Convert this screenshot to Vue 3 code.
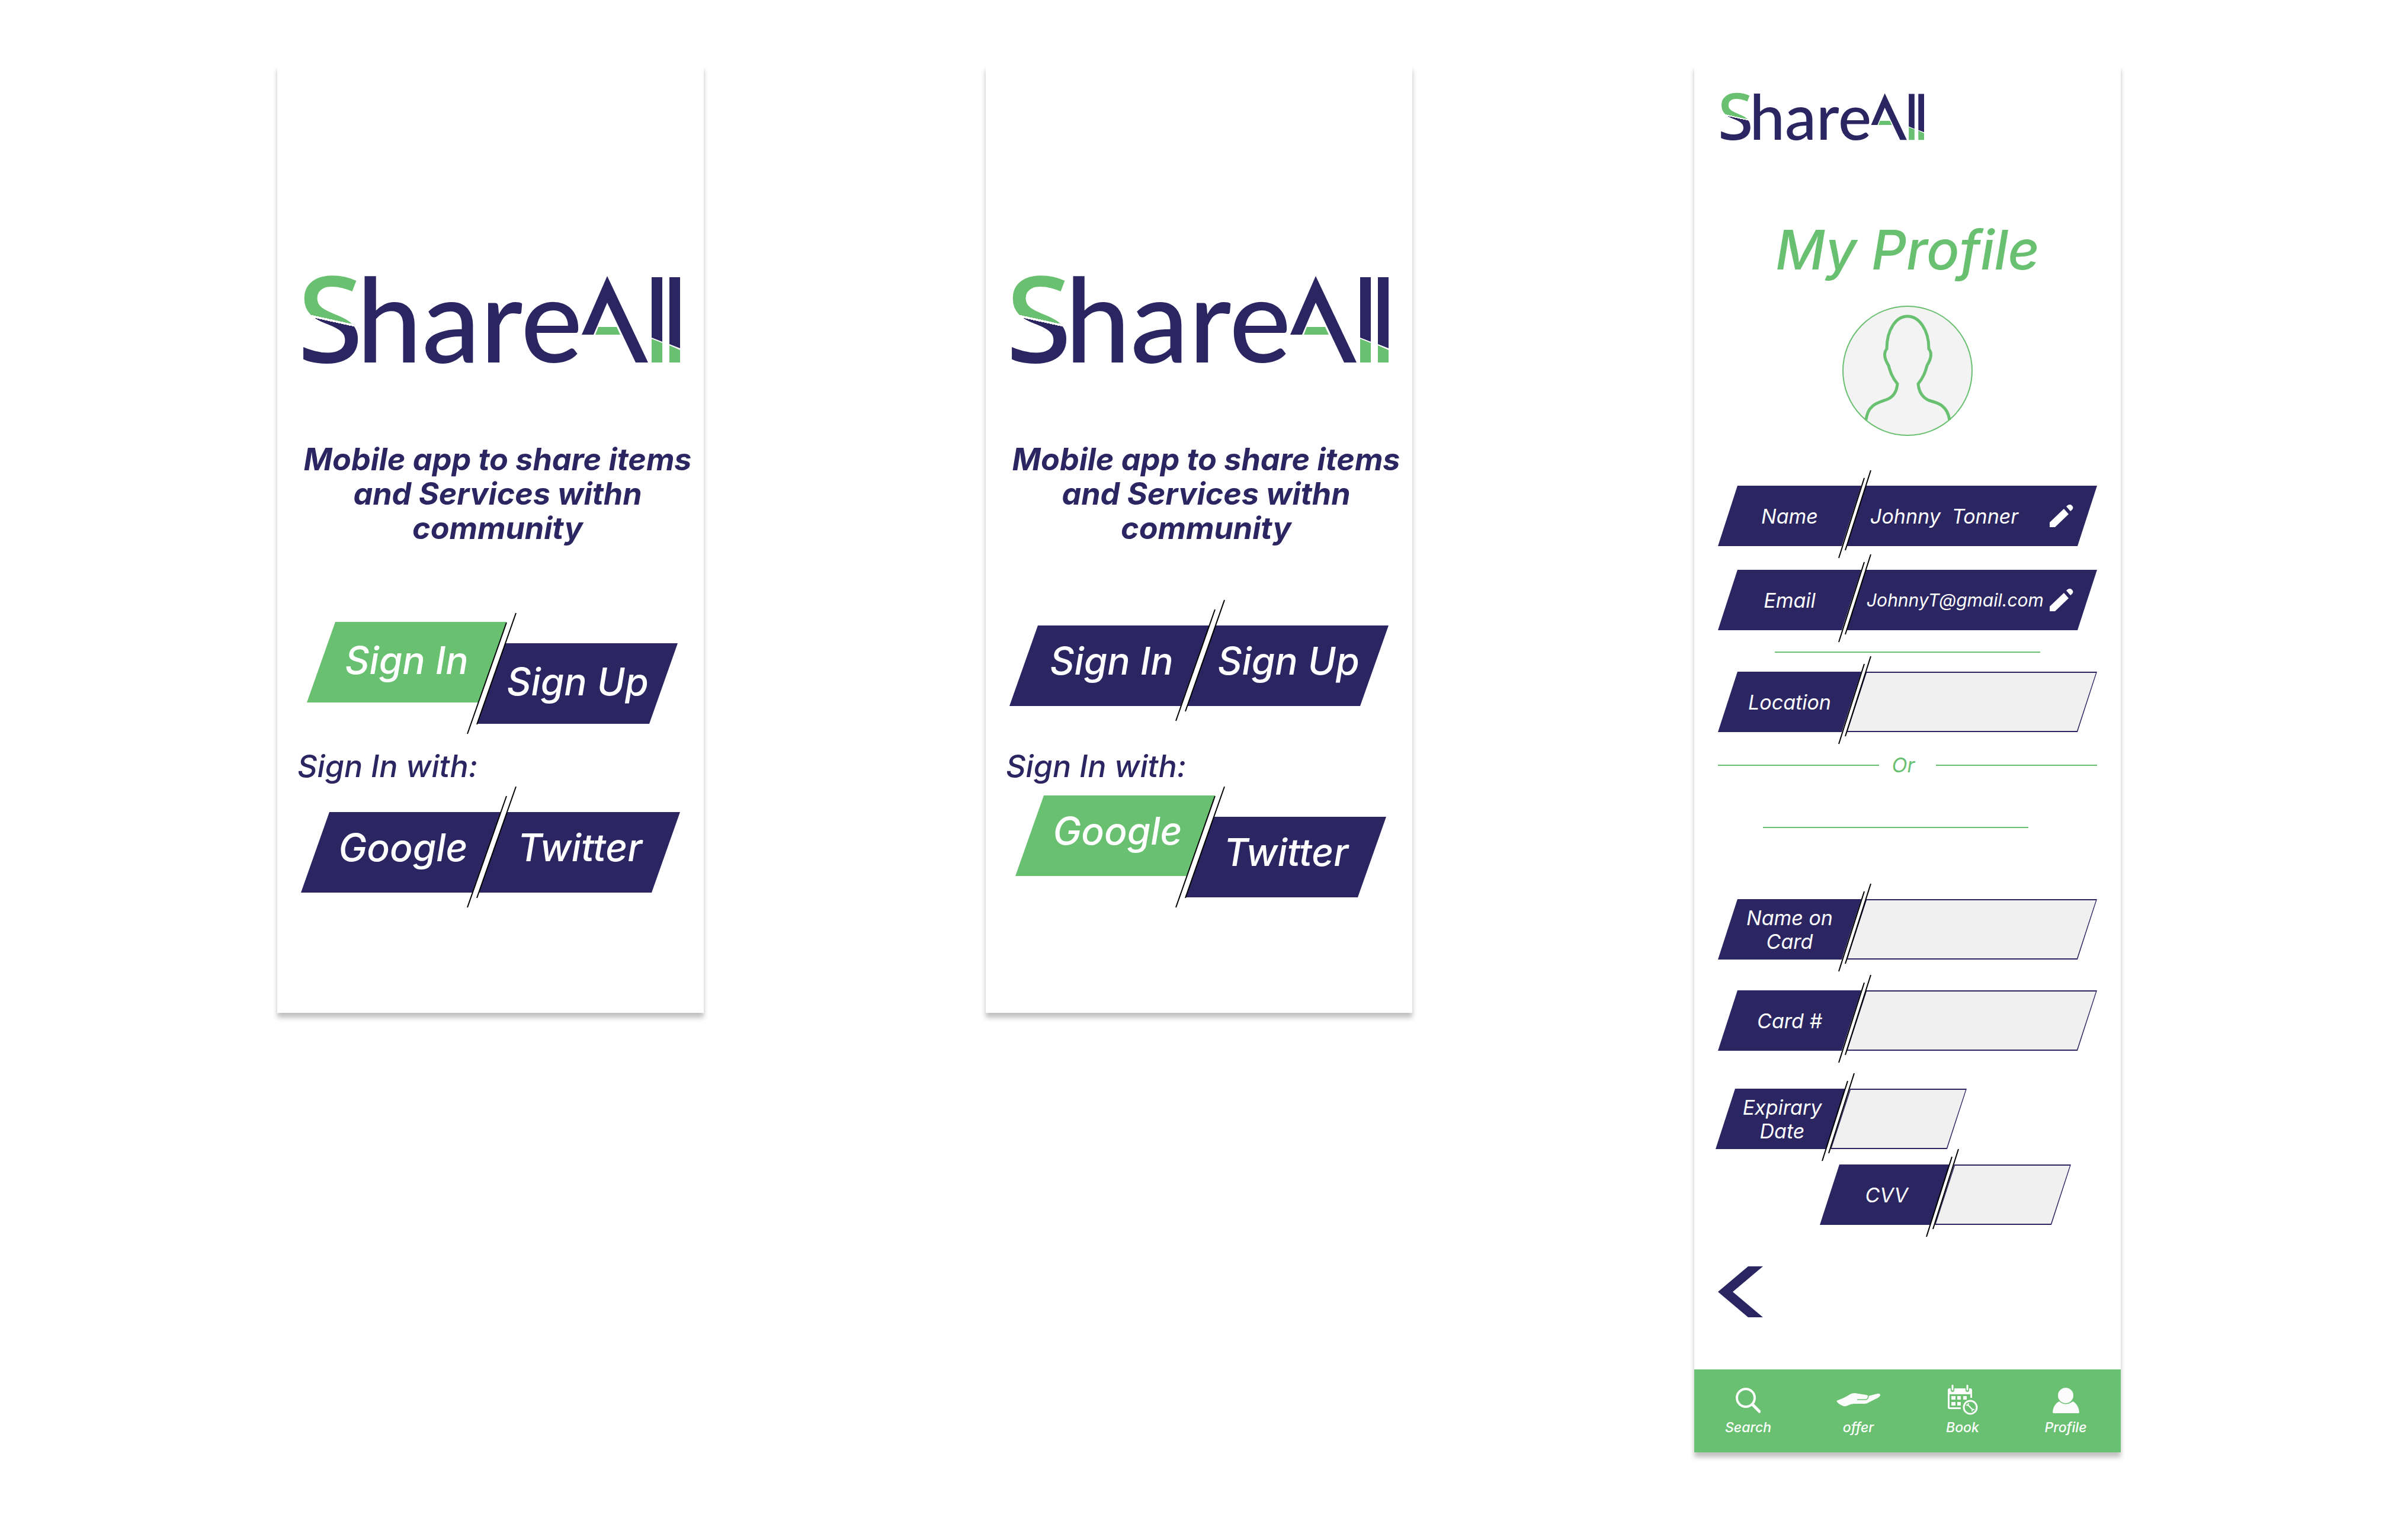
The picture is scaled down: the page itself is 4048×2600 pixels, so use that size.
<script setup>
import { h, reactive } from 'vue'

const NAVY = '#2b2662'
const GREEN = '#69c071'

/* Word mark: live text for "Share", followed by the roof-and-bars emblem. */
const BrandLogo = (props) =>
  h('svg', { viewBox: '0 0 638 150', role: 'img', 'aria-label': 'ShareAll', overflow: 'visible' }, [
    h('defs', [
      h('linearGradient', { id: 'split-' + props.uid, gradientUnits: 'userSpaceOnUse', x1: 66, y1: -23, x2: 23, y2: 173 }, [
        h('stop', { offset: '49.1%', 'stop-color': GREEN }),
        h('stop', { offset: '49.1%', 'stop-color': '#fff' }),
        h('stop', { offset: '50.9%', 'stop-color': '#fff' }),
        h('stop', { offset: '50.9%', 'stop-color': NAVY })
      ])
    ]),
    h('g', { 'font-weight': 500, 'font-style': 'normal' }, [
      h('text', { x: -8, y: 147, 'font-family': '"Noto Sans", sans-serif', 'font-size': 202, fill: `url(#split-${props.uid})` }, 'S'),
      h('text', { x: 92, y: 147, 'font-family': 'Lato, sans-serif', 'font-size': 197, fill: NAVY }, 'hare')
    ]),
    h('path', { fill: NAVY, d: 'M515 1L584 147H563L515 46L492 100H472Z' }),
    h('path', { fill: GREEN, d: 'M500 87H531L537 100H495Z' }),
    h('path', { fill: NAVY, d: 'M590 3H608V112L590 105ZM620 3H638V123L620 116Z' }),
    h('path', { fill: GREEN, d: 'M590 107L608 114V147H590ZM620 118L638 126V147H620Z' })
  ])
BrandLogo.props = ['uid']

const screens = [
  {
    id: 'a',
    rows: [
      { raised: true, low: true, items: ['Sign In', 'Sign Up'] },
      { raised: false, items: ['Google', 'Twitter'] }
    ]
  },
  {
    id: 'b',
    rows: [
      { raised: false, items: ['Sign In', 'Sign Up'] },
      { raised: true, items: ['Google', 'Twitter'] }
    ]
  }
]

const account = reactive([
  { id: 'name', label: 'Name', value: 'Johnny  Tonner' },
  { id: 'email', label: 'Email', value: 'JohnnyT@gmail.com', small: true }
])

const card = reactive([
  { id: 'card-name', label: 'Name on Card', value: '' },
  { id: 'card-number', label: 'Card #', value: '' },
  { id: 'card-expiry', label: 'Expirary Date', value: '', short: true },
  { id: 'card-cvv', label: 'CVV', value: '', short: true }
])
const place = reactive({ value: '' })
</script>

<template>
  <main class="board">
    <section v-for="screen in screens" :key="screen.id" class="phone">
      <BrandLogo class="logo" :uid="screen.id" />
      <p class="tagline">Mobile app to share items and Services withn community</p>
      <template v-for="(row, i) in screen.rows" :key="i">
        <p v-if="i === 1" class="with">Sign In with:</p>
        <div class="slot" :class="'slot-' + (i + 1)">
          <div class="choices" :class="{ raised: row.raised, low: row.low, level: !row.raised }">
            <button v-for="item in row.items" :key="item" type="button" class="choice">{{ item }}</button>
            <svg class="slash" viewBox="0 0 84 206" aria-hidden="true">
              <path d="M67 17L1 205L17 189L83 1Z" fill="#fff" />
              <path d="M67 17L1 205M83 1L17 189" stroke="#000" stroke-width="2" />
            </svg>
          </div>
        </div>
      </template>
    </section>

    <section class="phone profile">
      <BrandLogo class="logo-small" uid="c" />
      <h1 class="title">My Profile</h1>
      <svg class="avatar" viewBox="0 0 220 220" fill="none" role="img" aria-label="Profile picture">
        <circle cx="110" cy="110" r="109" fill="#f3f3f3" stroke="#69c071" stroke-width="2" />
        <path d="M40 193C43 167 60 164 74 159C88 154 92 143 93 132C84 121 81 112 78 101C70 88 70 79 75 73C75 40 91 18 110 18C129 18 146 40 146 73C151 79 151 88 143 101C140 112 137 121 128 132C129 143 133 154 146 160C160 164 177 167 181 193" stroke="#69c071" stroke-width="5" />
      </svg>

      <form class="form" @submit.prevent>
        <div v-for="f in account" :key="f.id" class="field" :class="f.id">
          <label :for="f.id" class="tag">{{ f.label }}</label>
          <div class="value filled">
            <input :id="f.id" v-model="f.value" type="text" class="entry" :class="{ small: f.small }">
            <button type="button" class="edit" :aria-label="'Edit ' + f.label">
              <svg viewBox="0 0 40 40" fill="#fff" aria-hidden="true">
                <path d="M0 31L24 8L32 17L9 39H0Z" />
                <path d="M28 4Q34 -2 38 3Q42 7 35 12Z" />
              </svg>
            </button>
          </div>
          <svg class="cut" viewBox="0 0 56 150" aria-hidden="true">
            <path d="M44 14L1 149L12 136L55 1Z" fill="#fff" />
            <path d="M44 14L1 149M55 1L12 136" stroke="#000" stroke-width="2" />
          </svg>
        </div>

        <hr class="rule first">

        <div class="field location">
          <label for="location" class="tag">Location</label>
          <div class="value"><input id="location" v-model="place.value" type="text" class="blank"></div>
          <svg class="cut" viewBox="0 0 56 150" aria-hidden="true">
            <path d="M44 14L1 149L12 136L55 1Z" fill="#fff" />
            <path d="M44 14L1 149M55 1L12 136" stroke="#000" stroke-width="2" />
          </svg>
        </div>

        <div class="or"><hr class="rule"><span>Or</span><hr class="rule"></div>

        <hr class="rule second">

        <div v-for="f in card" :key="f.id" class="field" :class="[f.id, { short: f.short }]">
          <label :for="f.id" class="tag">{{ f.label }}</label>
          <div class="value"><input :id="f.id" v-model="f.value" type="text" class="blank"></div>
          <svg class="cut" viewBox="0 0 56 150" aria-hidden="true">
            <path d="M44 14L1 149L12 136L55 1Z" fill="#fff" />
            <path d="M44 14L1 149M55 1L12 136" stroke="#000" stroke-width="2" />
          </svg>
        </div>

        <button type="button" class="back" aria-label="Back">
          <svg viewBox="0 0 76 86" aria-hidden="true"><path d="M0 43L51 0H76L25 43L76 86H51Z" fill="#2b2662" /></svg>
        </button>
      </form>

      <nav class="tabs">
        <a href="#search">
          <svg width="42" height="52" viewBox="0 -5 42 52" fill="none" stroke="#fcfcfc" aria-hidden="true">
            <circle cx="17" cy="17" r="15" stroke-width="4" />
            <path d="M28 28L40 40" stroke-width="5" stroke-linecap="round" />
          </svg>
          <span>Search</span>
        </a>
        <a href="#offer">
          <svg width="74" height="52" viewBox="0 -14 74 52" aria-hidden="true">
            <path fill="#fcfcfc" d="M0 13Q14 8 23 2Q26 0 31 0L50 3Q54 4 54 5L69 1Q74 0 74 4Q73 6 70 8L52 17Q50 18 47 18L30 18Q24 18 19 21Q15 23 12 22Q3 19 0 13Z" />
            <path d="M35 11H50Q54 10 54 4" fill="none" stroke="#69c071" stroke-width="1.5" />
          </svg>
          <span>offer</span>
        </a>
        <a href="#book">
          <svg width="51" height="52" viewBox="0 0 51 52" aria-hidden="true">
            <path fill="#fcfcfc" fill-rule="evenodd" d="M3 6H38Q41 6 41 9V41H3Q0 41 0 38V9Q0 6 3 6ZM3 16V38H38V16Z" />
            <path fill="#fcfcfc" d="M6 19H13V25H6ZM16 19H22V25H16ZM6 29H13V35H6ZM16 29H22V35H16Z" />
            <path d="M8 2V9M33 2V9" stroke="#69c071" stroke-width="6" stroke-linecap="round" />
            <path d="M8 1V8M33 1V8" stroke="#fcfcfc" stroke-width="3" stroke-linecap="round" />
            <path d="M36 22H44V40H22V37H36Z" fill="#69c071" />
            <path d="M22 38H26V44H22Z" fill="#69c071" />
            <path d="M26 19H32V25H26Z" fill="#fcfcfc" />
            <circle cx="38" cy="38" r="14" fill="#69c071" />
            <circle cx="38" cy="38" r="11" fill="none" stroke="#fcfcfc" stroke-width="3" />
            <path d="M34 34L42 42" stroke="#fcfcfc" stroke-width="2" />
            <path d="M31 34Q34 36 35 31M45 42Q41 40 41 45" fill="none" stroke="#fcfcfc" stroke-width="2" />
          </svg>
          <span>Book</span>
        </a>
        <a href="#profile">
          <svg width="45" height="52" viewBox="0 -5 45 52" fill="#fcfcfc" aria-hidden="true">
            <circle cx="22" cy="13" r="13" />
            <path d="M0 41C1 32 5 26 11 23Q22 32 34 23C40 26 44 32 45 41Q45 43 43 43H2Q0 43 0 41Z" />
          </svg>
          <span>Profile</span>
        </a>
      </nav>
    </section>
  </main>
</template>

<style>
body {
  margin: 0;
  background: #fff;
}
</style>

<style scoped>
.board {
  --navy: #2b2662;
  --green: #69c071;
  display: flex;
  justify-content: center;
  align-items: flex-start;
  gap: 110px 476px;
  padding: 110px 0 140px;
  font-family: Inter, "Noto Sans", sans-serif;
  font-style: italic;
  font-weight: 500;
  font-variant-ligatures: none;
  color: var(--navy);
}

.board *,
.board *::before {
  box-sizing: border-box;
}

.board button,
.board input {
  margin: 0;
  border: 0;
  font: inherit;
  font-variant-ligatures: none;
  color: inherit;
}

.board button {
  cursor: pointer;
}

.board svg {
  display: block;
}

.phone {
  flex: 0 1 720px;
  min-width: 0;
  min-height: 1600px;
  background: #fff;
  box-shadow: 0 8px 8px rgba(0, 0, 0, 0.25);
}

.logo {
  width: 638px;
  margin: 355px 0 0 42px;
}

.tagline {
  margin: 132px 8px 0 32px;
  font-size: 52px;
  line-height: 58px;
  font-weight: 700;
  text-align: center;
}

.with {
  margin: 0 0 0 34px;
  font-size: 52px;
  line-height: 64px;
}

.slot {
  padding: 0 40px;
}

.slot-1 {
  min-height: 212px;
  margin-top: 129px;
}

.slot-1:has(.level) {
  padding-top: 6px;
}

.slot-2 {
  margin-top: 17px;
}

.slot-2:has(.level) {
  padding-top: 28px;
}

.choices {
  position: relative;
  display: flex;
  justify-content: space-between;
  align-items: flex-start;
}

.choice {
  flex: 0 0 337px;
  height: 136px;
  padding: 0 0 18px 8px;
  background: var(--navy);
  clip-path: polygon(48px 0, 100% 0, calc(100% - 48px) 100%, 0 100%);
}

.board .choice {
  color: #fff;
  font-size: 64px;
}

.board .choice + .choice {
  flex-basis: 342px;
  margin-left: -39px;
  padding-left: 4px;
}

.raised {
  padding: 0 4px 0 10px;
}

.raised .choice:first-child {
  background: var(--green);
}

.board .raised .choice + .choice {
  margin: 36px 0 0 -53px;
}

.low .choice {
  padding: 0 0 8px;
}

.slash {
  position: absolute;
  top: -44px;
  left: 280px;
  width: 84px;
}

.raised .slash {
  top: -16px;
}

.profile {
  display: flex;
  flex-direction: column;
}

.logo-small {
  width: 344px;
  margin: 47px 0 0 44px;
}

.title {
  margin: 128px 0 0;
  font-size: 92px;
  line-height: 112px;
  font-weight: 500;
  text-align: center;
  color: var(--green);
}

.avatar {
  width: 220px;
  margin: 38px auto 0;
}

.form {
  padding: 84px 40px 88px;
  font-weight: 400;
}

.field {
  position: relative;
  display: flex;
  height: 102px;
}

.tag {
  flex: 0 0 242px;
  display: flex;
  align-items: center;
  justify-content: center;
  padding: 2px 36px 0;
  background: var(--navy);
  color: #fff;
  font-size: 34px;
  line-height: 40px;
  text-align: center;
  clip-path: polygon(33px 0, 100% 0, calc(100% - 33px) 100%, 0 100%);
}

.value {
  flex: 1;
  min-width: 0;
  display: flex;
  align-items: center;
  margin-left: -25px;
  padding: 2px;
  background: var(--navy);
  clip-path: polygon(33px 0, 100% 0, calc(100% - 33px) 100%, 0 100%);
}

.blank {
  width: 100%;
  height: 100%;
  padding: 0 40px;
  background: #f0f0f0;
  font-size: 34px;
  outline: 0;
  clip-path: polygon(32px 0, 100% 0, calc(100% - 32px) 100%, 0 100%);
}

.filled {
  padding: 0 40px 0 34px;
}

.board .entry {
  flex: 1;
  min-width: 0;
  padding: 2px 0 0 6px;
  background: none;
  color: #fff;
  font-size: 34px;
  outline: 0;
}

.board .entry.small {
  padding: 0;
  font-size: 30px;
}

.board .edit {
  flex: none;
  width: 40px;
  height: 40px;
  padding: 0;
  background: none;
}

.cut {
  position: absolute;
  top: -27px;
  left: 203px;
  width: 56px;
}

.email {
  margin-top: 40px;
}

.location {
  margin-top: 32px;
}

.rule {
  height: 2px;
  margin: 0;
  border: 0;
  background: var(--green);
}

.first {
  margin: 36px 96px 0;
}

.or {
  display: flex;
  align-items: center;
  margin-top: 36px;
  color: var(--green);
  font-size: 34px;
  line-height: 40px;
}

.or .rule {
  flex: 1;
}

.or span {
  flex: 0 0 96px;
  padding-right: 14px;
  text-align: center;
}

.second {
  margin: 84px 116px 120px 76px;
}

.card-number {
  margin-top: 52px;
}

.short {
  width: 424px;
}

.short .tag {
  flex-basis: 219px;
  padding: 2px 30px 0 36px;
}

.short .cut {
  left: 179px;
}

.card-expiry {
  margin: 64px 0 0 -4px;
}

.card-cvv {
  margin: 26px 0 0 172px;
}

.back {
  display: block;
  width: 76px;
  padding: 0;
  background: none;
}

.board .back {
  margin-top: 70px;
}

.tabs {
  display: grid;
  grid-template-columns: 182fr 190fr 162fr 186fr;
  height: 140px;
  background: var(--green);
}

.tabs a {
  display: flex;
  flex-direction: column;
  align-items: center;
  gap: 6px;
  padding-top: 26px;
  color: #fff;
  font-size: 23px;
  line-height: 28px;
  text-decoration: none;
}
</style>
